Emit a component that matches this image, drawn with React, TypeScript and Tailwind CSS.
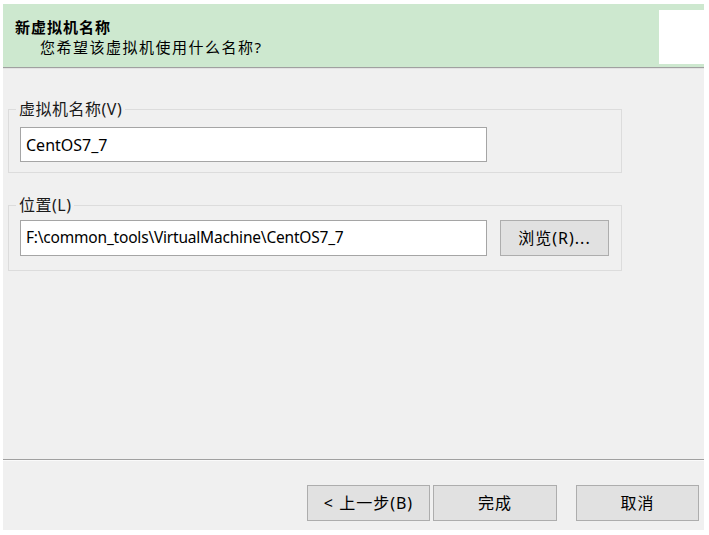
import React from "react";

const font = { fontFamily: '"Noto Sans", "Noto Sans CJK SC", sans-serif' };

function Btn({ children, className = "" }: { children: React.ReactNode; className?: string }) {
  return (
    <button
      className={
        "h-[36px] bg-[#e1e1e1] border border-[#adadad] text-[16px] leading-none text-black flex items-center justify-center " +
        className
      }
    >
      {children}
    </button>
  );
}

export default function App() {
  return (
    <div className="w-[709px] h-[535px] bg-white overflow-hidden" style={font}>
      <div className="ml-[3px] mt-[4px] w-[701px] h-[526px] bg-[#f0f0f0] flex flex-col text-black">
        {/* Header */}
        <div className="h-[63px] bg-[#cde8cf] flex justify-between">
          <div className="pl-[12px] pt-[13px]">
            <div className="text-[15px] font-bold leading-[20px] tracking-[1px]">新虚拟机名称</div>
            <div className="pl-[25px] text-[15px] leading-[20px] tracking-[1.5px]">您希望该虚拟机使用什么名称?</div>
          </div>
          <div className="mt-[6px] w-[45px] h-[54px] bg-white" />
        </div>
        <div className="h-[1px] bg-[#a0a0a0]" />
        <div className="h-[1px] bg-[#e3e3e3]" />

        {/* Content */}
        <div className="flex-1 pl-[5px] pt-[30px]">
          <fieldset className="w-[614px] border border-[#dcdcdc] pl-[11px] pb-[10px] m-0">
            <legend className="-ml-[4px] px-[3px] text-[16px] leading-[20px] tracking-[0.5px] text-[#1a1a1a]">
              虚拟机名称(V)
            </legend>
            <div className="mt-[8px] w-[467px] h-[35px] bg-white border border-[#a5a5a5] flex items-center pl-[5px] text-[16px]">
              CentOS7_7
            </div>
          </fieldset>

          <fieldset className="mt-[22px] w-[614px] border border-[#dcdcdc] pl-[11px] pb-[14px] m-0">
            <legend className="-ml-[4px] px-[3px] text-[16px] leading-[20px] tracking-[0.5px] text-[#1a1a1a]">
              位置(L)
            </legend>
            <div className="mt-[5px] flex items-center gap-[13px]">
              <div className="w-[467px] h-[36px] bg-white border border-[#a5a5a5] flex items-center pl-[5px] text-[15.5px] tracking-[-0.2px]">
                F:\common_tools\VirtualMachine\CentOS7_7
              </div>
              <Btn className="w-[109px] h-[34px] tracking-[1px]">浏览(R)...</Btn>
            </div>
          </fieldset>
        </div>

        {/* Footer */}
        <div className="h-[1px] bg-[#a0a0a0]" />
        <div className="h-[1px] bg-[#fafafa]" />
        <div className="h-[69px] flex justify-end items-start pt-[24px] pr-[5px]">
          <Btn className="w-[123px] tracking-[1px]">&lt; 上一步(B)</Btn>
          <Btn className="w-[124px] ml-[3px] tracking-[1px]">完成</Btn>
          <Btn className="w-[123px] ml-[19px] tracking-[1px]">取消</Btn>
        </div>
      </div>
    </div>
  );
}
